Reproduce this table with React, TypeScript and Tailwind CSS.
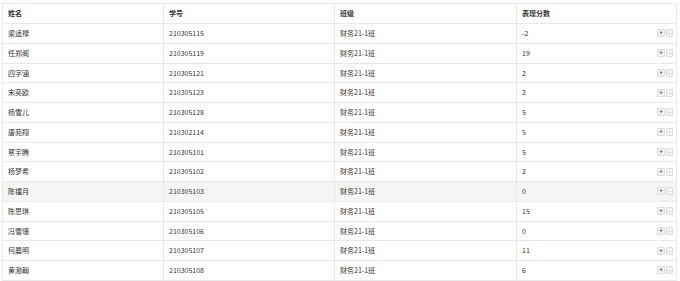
const rows: [string, string, string, string][] = [
  ['梁适禄', '210305115', '财务21-1班', '-2'],
  ['任郑阁', '210305119', '财务21-1班', '19'],
  ['四字涵', '210305121', '财务21-1班', '2'],
  ['宋奕欧', '210305123', '财务21-1班', '2'],
  ['杨雪儿', '210305128', '财务21-1班', '5'],
  ['唐苑翔', '210302114', '财务21-1班', '5'],
  ['蔡宇腾', '210305101', '财务21-1班', '5'],
  ['杨梦希', '210305102', '财务21-1班', '2'],
  ['陈镭月', '210305103', '财务21-1班', '0'],
  ['陈思琪', '210305105', '财务21-1班', '15'],
  ['冯雪珊', '210305106', '财务21-1班', '0'],
  ['何晨明', '210305107', '财务21-1班', '11'],
  ['黄渤翰', '210305108', '财务21-1班', '6'],
];

const cell = 'border border-[#e9e9e9] px-[5px] align-middle';

export default function App() {
  return (
    <div className="bg-white w-[680px] h-[281px] overflow-hidden pl-[2px] pt-[3px] text-[7px] text-[#333] font-['Noto_Sans_CJK_SC','Noto_Sans',sans-serif]">
      <table className="border-collapse w-[675px] table-fixed">
        <colgroup>
          <col className="w-[161px]" />
          <col className="w-[171px]" />
          <col className="w-[182px]" />
          <col />
        </colgroup>
        <thead>
          <tr className="h-[20px]">
            {['姓名', '学号', '班级', '表现分数'].map(h => (
              <th key={h} className={`${cell} text-left font-bold`}>{h}</th>
            ))}
          </tr>
        </thead>
        <tbody>
          {rows.map((r, i) => (
            <tr key={r[1]} className={`h-[19.75px] ${i === 8 ? 'bg-[#f5f5f5]' : ''}`}>
              <td className={cell}>{r[0]}</td>
              <td className={cell}>{r[1]}</td>
              <td className={cell}>{r[2]}</td>
              <td className={`${cell} pr-[3px]`}>
                <div className="flex items-center justify-between">
                  <span>{r[3]}</span>
                  <div className="flex gap-[1px]">
                    <span className="w-[8px] h-[8px] border border-[#ddd] bg-[#f2f2f2] rounded-[1px] flex items-center justify-center text-[6px] leading-none text-[#555] font-bold">+</span>
                    <span className="w-[7px] h-[8px] border border-[#ddd] bg-[#f2f2f2] rounded-[1px] flex items-center justify-center text-[6px] leading-none text-[#888]">-</span>
                  </div>
                </div>
              </td>
            </tr>
          ))}
        </tbody>
      </table>
    </div>
  );
}
